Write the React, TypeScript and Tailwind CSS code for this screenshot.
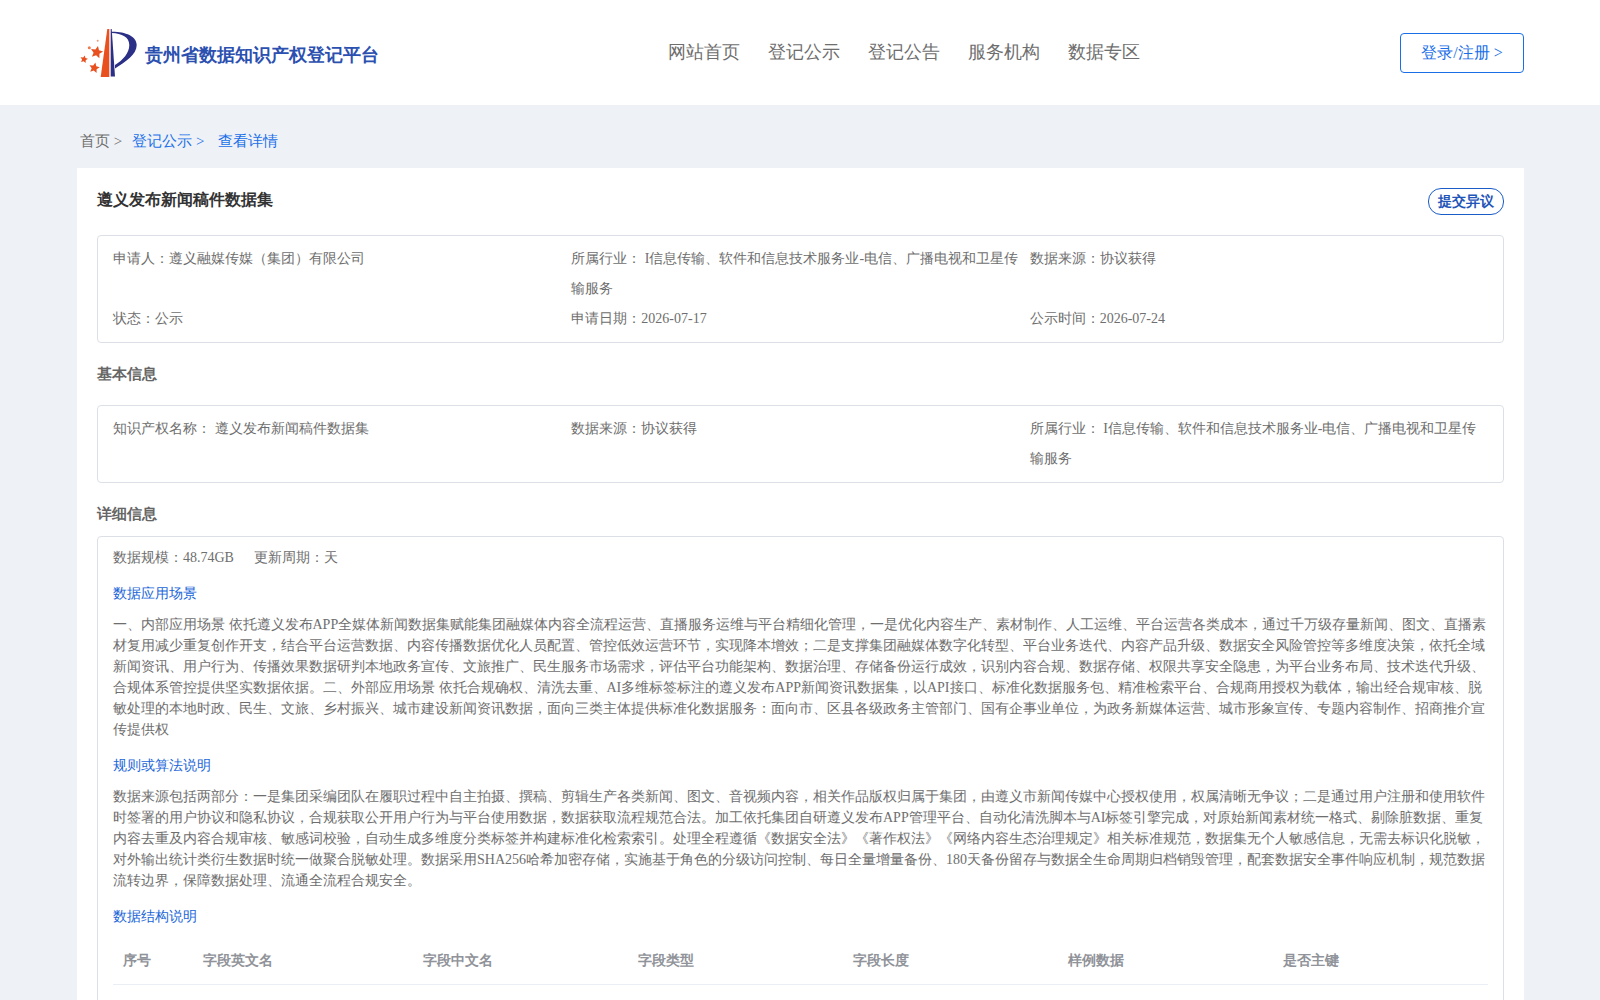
const navItems = ["网站首页", "登记公示", "登记公告", "服务机构", "数据专区"];
const fields = ["字段英文名", "字段中文名", "字段类型", "字段长度", "样例数据", "是否主键"];

function starPoints(cx: number, cy: number, r: number) {
  const pts: string[] = [];
  for (let i = 0; i < 10; i++) {
    const rad = i % 2 === 0 ? r : r * 0.48;
    const a = -Math.PI / 2 + 0.2 + (i * Math.PI) / 5;
    pts.push(`${(cx + rad * Math.cos(a)).toFixed(2)},${(cy + rad * Math.sin(a)).toFixed(2)}`);
  }
  return pts.join(" ");
}

function Logo() {
  return (
    <svg width="60" height="52" viewBox="0 1 60 52" className="shrink-0">
      <polygon points="27.3,1 29.3,1 29.3,49 20.7,49" fill="#e8501f" />
      <polygon points="30.7,1 31.7,1 35,48.5 30.7,48.5" fill="#2b2f86" />
      <path d="M31.7 3.7 C45 3.5 56.7 8 56.7 17 C56.7 27 45 34 35 40.5 L35 37 C43 32 49.3 25 49.3 17 C49.3 9 42 5.5 31.7 5 Z" fill="#2b2f86" />
      <polygon points={starPoints(16.7, 24.3, 6.5)} fill="#e8501f" />
      <polygon points={starPoints(4, 31.3, 4)} fill="#e8501f" />
      <polygon points={starPoints(14.3, 40, 5.5)} fill="#e8501f" />
      <circle cx="9.3" cy="19.7" r="1.5" fill="#ee7a50" />
      <circle cx="17.7" cy="12.7" r="1" fill="#ee9a7a" />
    </svg>
  );
}

function Box({ className, children }: { className?: string; children: React.ReactNode }) {
  return <div className={"rounded-[4px] border border-[#dcdfe6] " + (className ?? "")}>{children}</div>;
}

export default function App() {
  return (
    <div className="min-h-screen bg-[#eef2f6] text-[14px] text-[#6e6e6e] font-['Liberation_Serif',serif]">
      <header className="flex h-[105px] items-center justify-between bg-white pl-[80px] pr-[76px]">
        <div className="flex w-[400px] items-center gap-[5px] pt-[5px]">
          <Logo />
          <span className="text-[18px] font-bold text-[#2b50b0]">贵州省数据知识产权登记平台</span>
        </div>
        <nav className="flex gap-[28px] text-[18px] text-[#6e6e6e] -ml-[72px]">
          {navItems.map((item) => (
            <span key={item}>{item}</span>
          ))}
        </nav>
        <button className="h-[40px] w-[124px] rounded-[4px] border border-[#1a6fe8] pt-[1px] text-[16px] text-[#1a6fe8]">
          登录/注册 &gt;
        </button>
      </header>

      <div className="flex h-[63px] items-center pl-[80px] pt-[10px] text-[15px]">
        <span>首页 &gt;</span>
        <span className="ml-[10px] text-[#1a6fe8]">登记公示 &gt;</span>
        <span className="ml-[14px] text-[#1a6fe8]">查看详情</span>
      </div>

      <main className="mx-[77px] w-[1447px] bg-white px-[20px] pb-[40px] pt-[20px]">
        <div className="flex h-[27px] items-start justify-between">
          <h1 className="text-[16px] font-bold leading-[24px] text-[#333]">遵义发布新闻稿件数据集</h1>
          <button className="h-[27px] w-[76px] rounded-[13px] border border-[#1a5cc8] text-[14px] font-bold text-[#1f55b8]">
            提交异议
          </button>
        </div>

        <Box className="mt-[20px] grid grid-cols-3 px-[15px] py-[8px] leading-[30px]">
          <div>申请人：遵义融媒传媒（集团）有限公司</div>
          <div className="pr-[10px]">所属行业： I信息传输、软件和信息技术服务业-电信、广播电视和卫星传输服务</div>
          <div>数据来源：协议获得</div>
          <div>状态：公示</div>
          <div>申请日期：2026-07-17</div>
          <div>公示时间：2026-07-24</div>
        </Box>

        <h2 className="mt-[20px] text-[15px] font-bold leading-[22px] text-[#666]">基本信息</h2>

        <Box className="mt-[20px] grid grid-cols-3 px-[15px] py-[8px] leading-[30px]">
          <div>知识产权名称： 遵义发布新闻稿件数据集</div>
          <div>数据来源：协议获得</div>
          <div className="pr-[10px]">所属行业： I信息传输、软件和信息技术服务业-电信、广播电视和卫星传输服务</div>
        </Box>

        <h2 className="mt-[20px] text-[15px] font-bold leading-[22px] text-[#666]">详细信息</h2>

        <Box className="mt-[11px] px-[15px] pt-[11px] pb-[30px]">
          <div className="flex gap-[20px] leading-[20px]">
            <span>数据规模：48.74GB</span>
            <span>更新周期：天</span>
          </div>

          <h3 className="mt-[16px] leading-[20px] text-[#1a66d9]">数据应用场景</h3>
          <p className="mt-[10px] leading-[21px]">
            一、内部应用场景 依托遵义发布APP全媒体新闻数据集赋能集团融媒体内容全流程运营、直播服务运维与平台精细化管理，一是优化内容生产、素材制作、人工运维、平台运营各类成本，通过千万级存量新闻、图文、直播素材复用减少重复创作开支，结合平台运营数据、内容传播数据优化人员配置、管控低效运营环节，实现降本增效；二是支撑集团融媒体数字化转型、平台业务迭代、内容产品升级、数据安全风险管控等多维度决策，依托全域新闻资讯、用户行为、传播效果数据研判本地政务宣传、文旅推广、民生服务市场需求，评估平台功能架构、数据治理、存储备份运行成效，识别内容合规、数据存储、权限共享安全隐患，为平台业务布局、技术迭代升级、合规体系管控提供坚实数据依据。二、外部应用场景 依托合规确权、清洗去重、AI多维标签标注的遵义发布APP新闻资讯数据集，以API接口、标准化数据服务包、精准检索平台、合规商用授权为载体，输出经合规审核、脱敏处理的本地时政、民生、文旅、乡村振兴、城市建设新闻资讯数据，面向三类主体提供标准化数据服务：面向市、区县各级政务主管部门、国有企事业单位，为政务新媒体运营、城市形象宣传、专题内容制作、招商推介宣传提供权
          </p>

          <h3 className="mt-[16px] leading-[20px] text-[#1a66d9]">规则或算法说明</h3>
          <p className="mt-[10px] leading-[21px]">
            数据来源包括两部分：一是集团采编团队在履职过程中自主拍摄、撰稿、剪辑生产各类新闻、图文、音视频内容，相关作品版权归属于集团，由遵义市新闻传媒中心授权使用，权属清晰无争议；二是通过用户注册和使用软件时签署的用户协议和隐私协议，合规获取公开用户行为与平台使用数据，数据获取流程规范合法。加工依托集团自研遵义发布APP管理平台、自动化清洗脚本与AI标签引擎完成，对原始新闻素材统一格式、剔除脏数据、重复内容去重及内容合规审核、敏感词校验，自动生成多维度分类标签并构建标准化检索索引。处理全程遵循《数据安全法》《著作权法》《网络内容生态治理规定》相关标准规范，数据集无个人敏感信息，无需去标识化脱敏，对外输出统计类衍生数据时统一做聚合脱敏处理。数据采用SHA256哈希加密存储，实施基于角色的分级访问控制、每日全量增量备份、180天备份留存与数据全生命周期归档销毁管理，配套数据安全事件响应机制，规范数据流转边界，保障数据处理、流通全流程合规安全。
          </p>

          <h3 className="mt-[16px] leading-[20px] text-[#1a66d9]">数据结构说明</h3>
          <div className="mt-[10px] grid grid-cols-[80px_220px_215px_215px_215px_215px_215px] border-b border-[#ebeef5] font-bold text-[#909399]">
            <div className="px-[10px] py-[12px] leading-[23px]">序号</div>
            {fields.map((f) => (
              <div key={f} className="px-[10px] py-[12px] leading-[23px]">
                {f}
              </div>
            ))}
          </div>
        </Box>
      </main>
    </div>
  );
}
